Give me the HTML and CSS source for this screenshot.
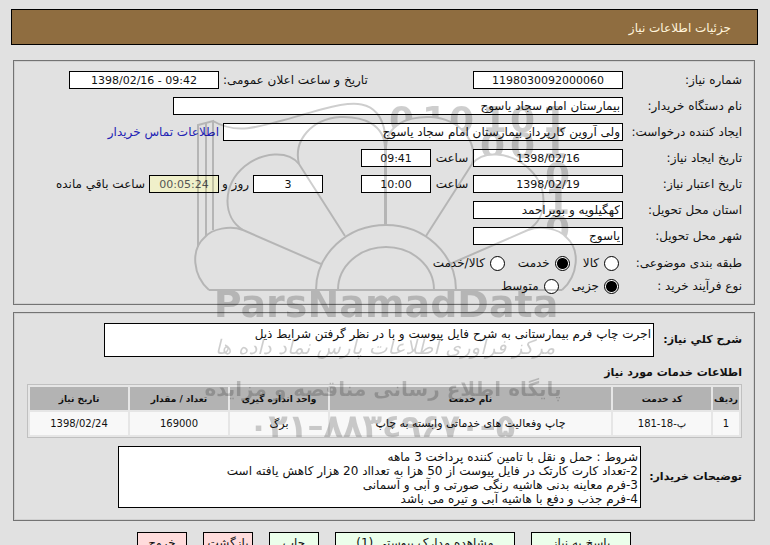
FILE: index.html
```html
<!DOCTYPE html>
<html lang="fa" dir="rtl">
<head>
<meta charset="utf-8">
<title>جزئیات اطلاعات نیاز</title>
<link rel="stylesheet" href="styles.css">
</head>
<body>
<header class="title-bar"><h1>جزئیات اطلاعات نیاز</h1></header>
<main>
<form>
  <section class="panel fields">
    <div class="row">
      <label class="name" for="no">شماره نیاز:</label>
      <input class="box medium center" id="no" value="1198030092000060">
      <label class="announce" for="ann">تاریخ و ساعت اعلان عمومی:</label>
      <input class="box medium center" id="ann" dir="ltr" value="1398/02/16 - 09:42">
    </div>
    <div class="row">
      <label class="name" for="org">نام دستگاه خریدار:</label>
      <input class="box widest" id="org" value="بیمارستان امام سجاد یاسوج">
    </div>
    <div class="row">
      <label class="name" for="creator">ایجاد کننده درخواست:</label>
      <input class="box wide" id="creator" value="ولی آروین کارپرداز بیمارستان امام سجاد یاسوج">
      <a class="contact" href="#">اطلاعات تماس خریدار</a>
    </div>
    <div class="row">
      <label class="name" for="d1">تاریخ ایجاد نیاز:</label>
      <input class="box medium center" id="d1" value="1398/02/16">
      <label class="hour" for="t1">ساعت</label>
      <input class="box small center" id="t1" value="09:41">
    </div>
    <div class="row">
      <label class="name" for="d2">تاریخ اعتبار نیاز:</label>
      <input class="box medium center" id="d2" value="1398/02/19">
      <label class="hour" for="t2">ساعت</label>
      <input class="box small center" id="t2" value="10:00">
      <input class="box small center days" id="days" value="3">
      <label class="day" for="days">روز و</label>
      <input class="box small center timer" id="left" value="00:05:24">
      <label class="remain" for="left">ساعت باقي مانده</label>
    </div>
    <div class="row">
      <label class="name" for="state">استان محل تحویل:</label>
      <input class="box medium" id="state" value="کهگیلویه و بویراحمد">
    </div>
    <div class="row">
      <label class="name" for="city">شهر محل تحویل:</label>
      <input class="box medium" id="city" value="یاسوج">
    </div>
    <div class="options">
      <div class="row choices" role="radiogroup" aria-labelledby="kind">
        <span class="name" id="kind">طبقه بندی موضوعی:</span>
        <label class="choice"><input type="radio" name="kind">کالا</label>
        <label class="choice"><input type="radio" name="kind" checked>خدمت</label>
        <label class="choice"><input type="radio" name="kind">کالا/خدمت</label>
      </div>
      <div class="row choices" role="radiogroup" aria-labelledby="process">
        <span class="name" id="process">نوع فرآیند خرید :</span>
        <label class="choice"><input type="radio" name="process" checked>جزیی</label>
        <label class="choice"><input type="radio" name="process">متوسط</label>
      </div>
    </div>
  </section>

  <section class="panel details">
    <div class="note">
      <label for="desc">شرح کلي نیاز:</label>
      <textarea class="summary" id="desc">اجرت چاپ فرم بیمارستانی به شرح فایل پیوست و با در نظر گرفتن شرایط ذیل</textarea>
    </div>
    <h2>اطلاعات خدمات مورد نیاز</h2>
    <table>
      <colgroup><col class="c-row"><col class="c-mid"><col><col class="c-mid"><col class="c-mid"><col class="c-mid"></colgroup>
      <thead><tr><th>ردیف</th><th>کد خدمت</th><th>نام خدمت</th><th>واحد اندازه گیری</th><th>تعداد / مقدار</th><th>تاریخ نیاز</th></tr></thead>
      <tbody><tr><td>1</td><td>پ-18-181</td><td class="text">چاپ وفعالیت های خدماتی وابسته به چاپ</td><td class="text">برگ</td><td>169000</td><td>1398/02/24</td></tr></tbody>
    </table>
    <div class="note">
      <label for="remarks">توضیحات خریدار:</label>
      <textarea class="remarks" id="remarks">شروط : حمل و نقل با تامین کننده پرداخت 3 ماهه
2-تعداد کارت کارتک در فایل پیوست از 50 هزا به تعدااد 20 هزار کاهش یافته است
3-فرم معاینه بدنی هاشیه رنگی صورتی و آبی و آسمانی
4-فرم جذب و دفع با هاشیه آبی و تیره می باشد</textarea>
    </div>
  </section>

  <div class="actions">
    <button class="go long" type="button">پاسخ به نیاز</button>
    <button class="go longer" type="button">مشاهده مدارک پیوستی (1)</button>
    <button class="go" type="button">چاپ</button>
    <button class="stop" type="button">بازگشت</button>
    <button class="stop" type="button">خروج</button>
  </div>
</form>
</main>

<svg class="watermark" viewBox="190 90 390 360" aria-hidden="true">
  <defs>
    <g id="petals">
      <path d="M321 264 L243 230 C230 225 212 229 205 237 C190 250 193 276 209 290"/>
      <path d="M345 236 L299 164 C288 150 263 152 245 166 C222 185 222 217 243 230"/>
      <path d="M385 225 V147 C384 125 364 116 340 117 C312 119 293 140 299 164"/>
    </g>
    <mask id="outside" maskUnits="userSpaceOnUse" x="190" y="90" width="390" height="360">
      <rect x="190" y="90" width="390" height="360" fill="#fff"/>
      <g transform="matrix(-1 0 0 1 771 0)">
        <path d="M385 290 V147 C384 125 364 116 340 117 C312 119 293 140 299 164 C288 150 263 152 245 166 C222 185 222 217 243 230 C230 225 212 229 205 237 C190 250 193 276 209 290Z" fill="#000"/>
      </g>
    </mask>
  </defs>
  <g class="lines">
    <use href="#petals"/>
    <use href="#petals" transform="matrix(-1 0 0 1 771 0)"/>
    <path d="M209 290 H562 M316 290 A70 65 0 0 1 456 290 M338 290 A48 43 0 0 1 434 290"/>
    <path d="M198 247 V125 L213 121 V230 M206 236 V123 M213 121 C240 137 264 125 323 109 C349 102 379 96 385 133 V147"/>
  </g>
  <g class="digits" mask="url(#outside)">
    <text x="389 422 449 482 510 542" y="132">010101</text>
    <text x="450 480 510 542" y="158">1001</text>
    <text x="545" y="188">0</text>
    <text x="545" y="214">1</text>
    <text x="545" y="241">0</text>
  </g>
  <text class="brand" x="386" y="317">ParsNamadData</text>
  <text class="slogan" x="385" y="354">مرکز فرآوری اطلاعات پارس نماد داده ها</text>
  <text class="site" x="383" y="396">پایگاه اطلاع رسانی مناقصه و مزایده</text>
  <text class="phone" x="382" y="437">۰۲۱–۸۸۳٤۹۶۷۰–۵</text>
</svg>
</body>
</html>
```
FILE: styles.css
```css
* { box-sizing: border-box; }
html { scrollbar-width: none; }
body {
  position: relative;
  margin: 0;
  padding: 9px 12px 0 11px;
  background: #e1e1e1;
  color: #111;
  font: 12px/14px "DejaVu Sans", sans-serif;
}
input, textarea, button { font: inherit; color: inherit; margin: 0; }

.title-bar {
  display: flex;
  align-items: center;
  height: 36px;
  padding: 2px 26px 0;
  border: 1px solid #000;
  background: #8f6d40;
  color: #fff4dc;
}
.title-bar h1 { margin: 0; font-size: 12px; font-weight: normal; }

main { padding: 15px 3px 0 2px; }
.panel { border: 1px solid #737373; box-shadow: inset 0 0 0 1px #d0d0d0; }
.fields {
  display: flex;
  flex-direction: column;
  gap: 8px;
  padding: 10px 12px 8px;
}
.row { display: flex; align-items: center; height: 18px; white-space: nowrap; }
.name { flex: 0 0 119px; }
.box {
  flex: none;
  height: 18px;
  padding: 0 2px;
  border: 1px solid #000;
  border-radius: 0;
  background: #fff;
}
.small { width: 70px; }
.medium { width: 150px; }
.wide { width: 400px; }
.widest { width: 450px; }
.center { text-align: center; font-size: 11px; }
.announce { width: 254px; padding-left: 4px; text-align: left; }
.contact { margin-right: 4px; color: #2222b4; text-decoration: none; }
.hour { width: 42px; text-align: center; }
.days { margin-right: 38px; }
.day { width: 34px; padding-right: 4px; }
.timer { background: #f0f0ca; color: #555; }
.remain { margin-right: 4px; }

.options { display: grid; gap: 3px; }
.choices { height: 20px; }
.choice { display: flex; align-items: center; gap: 5px; margin: 0 4px 0 9px; }
.choice input {
  appearance: none;
  width: 15px;
  height: 15px;
  border: 1px solid #000;
  border-radius: 50%;
  background: #fff;
}
.choice input:checked { background: radial-gradient(circle, #000 5px, #fff 6px); }

.details { margin-top: 7px; padding: 10px 12px 12px 13px; }
.note { display: flex; align-items: center; justify-content: space-between; }
.note label { font-size: 11px; font-weight: bold; white-space: nowrap; }
textarea {
  display: block;
  padding: 3px 2px;
  border: 1px solid #000;
  border-radius: 0;
  background: #fff;
  resize: none;
  overflow: hidden;
}
.summary { width: 550px; height: 34px; margin-left: 77px; }
.remarks { width: 523px; height: 62px; margin-left: 91px; }
h2 { margin: 9px 0 4px; font-size: 11px; line-height: 14px; }

table {
  width: 100%;
  margin-bottom: 8px;
  table-layout: fixed;
  border: 1px solid #c0c0c0;
  border-spacing: 2px;
  background: #e6e6e6;
  text-align: center;
}
.c-row { width: 26px; }
.c-mid { width: 98px; }
th, td { height: 23px; padding: 0; white-space: nowrap; font-size: 10px; }
th { background: #b3b3b3; font-size: 9px; }
td { background: #f8f8f8; }
td.text { font-size: 11px; }

.actions { display: flex; justify-content: center; gap: 16px; padding-top: 11px; }
button {
  width: 50px;
  height: 22px;
  padding: 0;
  border: 1px solid #000;
  border-radius: 0;
  white-space: nowrap;
}
.long { width: 100px; }
.longer { width: 180px; }
.go { background: #ebffeb; }
.stop { background: #ffdcdc; }

/* Site mark printed over the whole form */
.watermark {
  position: absolute;
  top: 90px;
  left: calc(50% - 195px);
  width: 390px;
  height: 360px;
  opacity: .19;
  pointer-events: none;
  direction: ltr;
  text-anchor: middle;
}
.lines { fill: none; stroke: #000; stroke-width: 2; }
.digits { font: bold 36px "DejaVu Sans", sans-serif; text-anchor: start; }
.brand { font: bold 38px "DejaVu Sans", sans-serif; }
.slogan { font: italic 20px "DejaVu Sans", sans-serif; direction: rtl; }
.site { font: bold 20px "DejaVu Sans", sans-serif; direction: rtl; }
.phone { font: bold 32px "DejaVu Sans", sans-serif; unicode-bidi: bidi-override; }
```
